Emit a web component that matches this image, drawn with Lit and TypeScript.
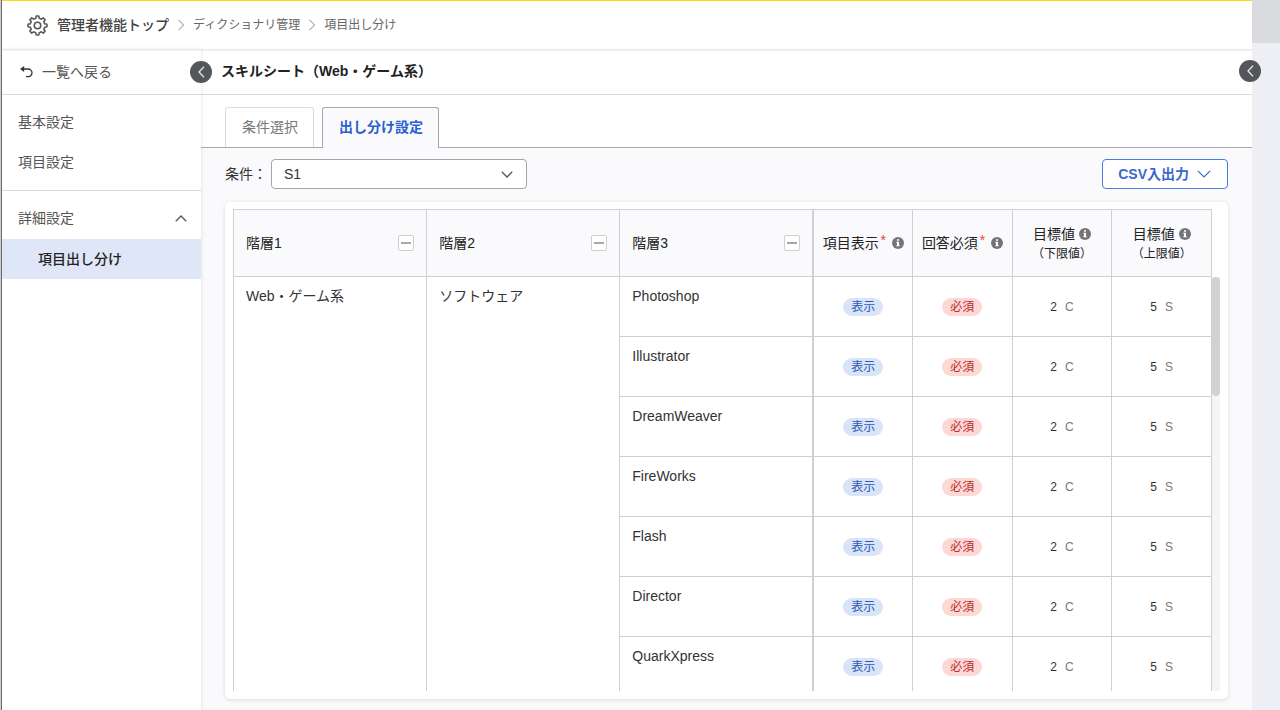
import { LitElement, html, css } from "lit";
import { customElement, state } from "lit/decorators.js";

interface SkillRow {
  name: string;
  min: [number, string];
  max: [number, string];
}

const SKILLS: SkillRow[] = [
  "Photoshop",
  "Illustrator",
  "DreamWeaver",
  "FireWorks",
  "Flash",
  "Director",
  "QuarkXpress",
].map((name) => ({ name, min: [2, "C"], max: [5, "S"] }));

const teeth = Array.from({ length: 8 }, (_, i) => {
  const at = (angle: number, r: number) =>
    `${(10 + r * Math.cos(angle)).toFixed(2)} ${(10 + r * Math.sin(angle)).toFixed(2)}`;
  const a = (i * Math.PI) / 4 - Math.PI / 2;
  const start = i ? `A7 7 0 0 1 ${at(a - 0.24, 7)}` : `M${at(a - 0.24, 7)}`;
  return `${start} L${at(a - 0.14, 9.1)} L${at(a + 0.14, 9.1)} L${at(a + 0.24, 7)}`;
}).join(" ");

const chevron = (points: string, box: string) => html`<svg
  class="chev"
  viewBox=${box}
  aria-hidden="true"
>
  <polyline points=${points} />
</svg>`;

const left = () => chevron("6,0.8 1,6 6,11.2", "0 0 7 12");
const right = () => chevron("1,0.8 6,6 1,11.2", "0 0 7 12");
const up = () => chevron("0.8,6.2 6,1 11.2,6.2", "0 0 12 7");
const down = () => chevron("0.8,0.8 6,6 11.2,0.8", "0 0 12 7");

const infoIcon = html`<svg class="info" viewBox="0 0 12 12" aria-hidden="true">
  <circle cx="6" cy="6" r="6" fill="#757579" />
  <path d="M5 2.2h2v1.6H5zM4.4 4.8H7v3.4h.7v1.1H4.3V8.2H5V5.9h-.6z" fill="#fff" />
</svg>`;

@customElement("app-root")
export class AppRoot extends LitElement {
  @state() private detailOpen = true;

  static styles = css`
    :host {
      display: grid;
      grid-template-columns: 2px minmax(0, 1fr) 28px;
      height: 100vh;
      box-sizing: border-box;
      font: 14px/20px "Liberation Sans", "Noto Sans CJK JP", sans-serif;
      color: #333;
      background: #fff;
    }
    * {
      box-sizing: border-box;
    }
    button,
    select {
      font: inherit;
      color: inherit;
      margin: 0;
      padding: 0;
      border: 0;
      background: none;
      cursor: pointer;
    }
    a {
      color: inherit;
      text-decoration: none;
    }
    .chev,
    .gear {
      fill: none;
      stroke: currentColor;
      flex: none;
    }
    .edge {
      background: linear-gradient(90deg, #cfcfcf 50%, #6d6d6d 50%);
    }
    .app {
      display: flex;
      flex-direction: column;
      min-width: 0;
      min-height: 0;
    }
    .topbar {
      flex: none;
      display: flex;
      align-items: center;
      height: 49px;
      padding-left: 25px;
      border-top: 1px solid #ffd814;
      box-shadow: 0 1px 2px rgba(0, 0, 0, 0.14);
      z-index: 2;
    }
    .gear {
      width: 21px;
      height: 21px;
      stroke: #58585a;
      stroke-width: 1.5;
      stroke-linejoin: round;
    }
    .crumbs {
      display: flex;
      align-items: center;
      gap: 8px;
      margin: 0;
      padding: 0 0 0 9px;
      list-style: none;
      font-size: 12px;
      color: #666;
    }
    .crumbs .chev {
      width: 8px;
      height: 12px;
      stroke: #888;
      display: block;
    }
    .crumb-top {
      font-size: 14px;
      font-weight: 500;
      color: #444;
    }
    .body {
      flex: 1;
      display: grid;
      grid-template-columns: 199px minmax(0, 1fr);
      min-height: 0;
    }
    .side {
      display: flex;
      flex-direction: column;
      box-shadow: 1px 0 3px rgba(0, 0, 0, 0.08);
      z-index: 1;
      background: #fff;
      color: #555;
    }
    .side-head {
      position: relative;
      display: flex;
      align-items: center;
      height: 46px;
      padding-left: 17px;
      border-bottom: 1px solid #d9d9d9;
    }
    .back {
      display: flex;
      align-items: center;
      gap: 8px;
    }
    .back svg {
      width: 15px;
      height: 14px;
      fill: none;
      stroke: #333;
      stroke-width: 1.3;
    }
    .round {
      position: absolute;
      display: grid;
      place-items: center;
      width: 22px;
      height: 22px;
      border-radius: 50%;
      background: #55565a;
      color: #e8e8e8;
    }
    .round .chev {
      width: 7px;
      height: 12px;
      stroke-width: 1.3;
    }
    .side-head .round {
      right: -11px;
      top: 12px;
    }
    .rail .round {
      left: -13px;
      top: 60px;
    }
    .menu {
      margin: 0;
      padding: 7px 0 8px;
      list-style: none;
      border-bottom: 1px solid #d9d9d9;
    }
    .menu a {
      display: block;
      padding: 10px 16px;
    }
    .group {
      display: flex;
      align-items: center;
      justify-content: space-between;
      padding: 17px 14px 11px 16px;
      text-align: left;
    }
    .group .chev {
      width: 12px;
      height: 7px;
      stroke-width: 1.3;
    }
    .current {
      padding: 10px 36px;
      background: #dfe6f7;
      color: #222;
      font-weight: 500;
    }
    .main {
      display: flex;
      flex-direction: column;
      min-width: 0;
      min-height: 0;
      background: #fafafd;
    }
    h1 {
      flex: none;
      margin: 0;
      height: 46px;
      padding: 12px 20px 0;
      border-bottom: 1px solid #d9d9d9;
      background: #fff;
      color: #222;
      font-size: 14px;
      font-weight: 700;
      line-height: 20px;
    }
    .tabs {
      flex: none;
      display: flex;
      gap: 8px;
      padding: 12px 24px 0;
      background: #fff;
      border-bottom: 1px solid #a9a9ab;
    }
    .tab {
      height: 40px;
      padding: 0 15px 2px 16px;
      border: 1px solid #dcdcde;
      border-bottom: 0;
      border-radius: 3px 3px 0 0;
      color: #777;
    }
    .tab.on {
      margin-bottom: -1px;
      height: 41px;
      border-color: #a9a9ab;
      background: #fafafd;
      color: #2b5fd0;
      font-weight: 700;
    }
    .tools {
      flex: none;
      display: flex;
      align-items: center;
      padding: 11px 24px 12px;
    }
    .tools label {
      margin-right: 4px;
      color: #333;
    }
    .picker {
      display: grid;
      align-items: center;
      width: 256px;
    }
    .picker > * {
      grid-area: 1 / 1;
    }
    .picker select {
      appearance: none;
      width: 100%;
      height: 30px;
      padding: 0 12px;
      border: 1px solid #a5a5a7;
      border-radius: 4px;
      background: #fff;
    }
    .picker .chev {
      justify-self: end;
      width: 12px;
      height: 7px;
      margin-right: 14px;
      stroke-width: 1.3;
      stroke: #555;
      pointer-events: none;
    }
    .csv {
      display: flex;
      align-items: center;
      gap: 8px;
      height: 30px;
      margin-left: auto;
      padding: 0 16px 0 15px;
      border: 1px solid #4a7be0;
      border-radius: 4px;
      background: #fff;
      color: #3a68cf;
      font-weight: 700;
    }
    .csv .chev {
      width: 14px;
      height: 8px;
      stroke-width: 1.2;
    }
    .card {
      flex: 1;
      display: grid;
      grid-template-columns: minmax(0, 1fr) 8px;
      min-height: 0;
      margin: 1px 24px 11px;
      padding: 7px 8px 8px;
      border-radius: 5px;
      background: #fff;
      box-shadow: 0 1px 4px rgba(0, 0, 0, 0.13);
    }
    .scroll {
      overflow: hidden;
      min-height: 0;
    }
    .bar {
      margin-top: 68px;
      background: #f5f5f5;
      overflow: hidden;
    }
    .thumb {
      height: 119px;
      border-radius: 4px;
      background: #d2d2d2;
    }
    table {
      width: 100%;
      table-layout: fixed;
      border-collapse: separate;
      border-spacing: 0;
      border-right: 1px solid #d0d0d2;
    }
    .col-level {
      width: 19.75%;
    }
    th,
    td {
      padding: 0;
      border-left: 1px solid #d0d0d2;
      border-bottom: 1px solid #d0d0d2;
    }
    th {
      height: 68px;
      border-top: 1px solid #d0d0d2;
      background: #fafafd;
      color: #222;
      font-weight: 400;
    }
    td {
      height: 60px;
      text-align: center;
    }
    .split {
      border-left-width: 2px;
    }
    .level {
      vertical-align: top;
      text-align: left;
      padding: 9px 12px 0;
    }
    .th-level {
      display: flex;
      align-items: center;
      justify-content: space-between;
      padding: 0 12px;
    }
    .fold {
      display: grid;
      place-items: center;
      width: 16px;
      height: 16px;
      border: 1px solid #cfcfcf;
      border-radius: 2px;
      background: #fff;
    }
    .fold::before {
      content: "";
      width: 10px;
      height: 2px;
      background: #a9a9a9;
    }
    .th-value {
      display: flex;
      align-items: center;
      justify-content: center;
      white-space: nowrap;
    }
    .star {
      align-self: flex-start;
      width: 7px;
      margin: 0 5px 0 1px;
      font-size: 14px;
      line-height: 14px;
      color: #e0453a;
    }
    .info {
      flex: none;
      width: 12px;
      height: 12px;
    }
    .goal {
      gap: 4px;
      padding-top: 2px;
    }
    .sub {
      display: block;
      font-size: 12px;
      line-height: 20px;
    }
    .pill {
      display: block;
      width: 40px;
      margin: 0 auto;
      border-radius: 9px;
      font-size: 12px;
      line-height: 18px;
    }
    .show {
      background: #d9e4f8;
      color: #2f5bb5;
    }
    .must {
      background: #fdd9d6;
      color: #b92f2f;
    }
    .score {
      display: flex;
      justify-content: center;
      gap: 8px;
      font-size: 12px;
      line-height: 18px;
    }
    .grade {
      color: #777;
    }
    .rail {
      position: relative;
      z-index: 2;
      background: linear-gradient(#dadbdf 43px, #eeeff4 43px);
    }
  `;

  private goalHead(sub: string) {
    return html`<th scope="col">
      <span class="th-value goal">目標値${infoIcon}</span>
      <span class="sub">（${sub}）</span>
    </th>`;
  }

  private flagHead(label: string, cls = "") {
    return html`<th scope="col" class=${cls}>
      <span class="th-value">${label}<span class="star">*</span>${infoIcon}</span>
    </th>`;
  }

  private score([value, grade]: [number, string]) {
    return html`<td>
      <span class="score"><span>${value}</span><span class="grade">${grade}</span></span>
    </td>`;
  }

  private row(r: SkillRow, i: number) {
    return html`<tr>
      ${i === 0
        ? html`<td class="level" rowspan=${SKILLS.length}>Web・ゲーム系</td>
            <td class="level" rowspan=${SKILLS.length}>ソフトウェア</td>`
        : ""}
      <td class="level">${r.name}</td>
      <td class="split"><span class="pill show">表示</span></td>
      <td><span class="pill must">必須</span></td>
      ${this.score(r.min)}${this.score(r.max)}
    </tr>`;
  }

  render() {
    return html`
      <div class="edge"></div>
      <div class="app">
        <header class="topbar">
          <svg class="gear" viewBox="0 0 20 20" aria-hidden="true">
            <path d="${teeth} A7 7 0 0 1 8.34 3.2 Z" />
            <circle cx="10" cy="10" r="3.1" />
          </svg>
          <ol class="crumbs">
            <li><a class="crumb-top" href="#">管理者機能トップ</a></li>
            <li>${right()}</li>
            <li><a href="#">ディクショナリ管理</a></li>
            <li>${right()}</li>
            <li>項目出し分け</li>
          </ol>
        </header>
        <div class="body">
          <nav class="side">
            <div class="side-head">
              <a class="back" href="#">
                <svg viewBox="0 0 15 14" aria-hidden="true">
                  <path d="M4 4h5.2a3.8 3.8 0 0 1 0 7.6H7" />
                  <path d="M1 4 5.2 .9v6.2z" fill="#333" stroke="none" />
                </svg>
                一覧へ戻る
              </a>
              <button class="round" aria-label="サイドメニュー">${left()}</button>
            </div>
            <ul class="menu">
              <li><a href="#">基本設定</a></li>
              <li><a href="#">項目設定</a></li>
            </ul>
            <button
              class="group"
              aria-expanded=${this.detailOpen}
              @click=${() => (this.detailOpen = !this.detailOpen)}
            >
              詳細設定 ${this.detailOpen ? up() : down()}
            </button>
            ${this.detailOpen
              ? html`<a class="current" href="#" aria-current="page">項目出し分け</a>`
              : ""}
          </nav>
          <main class="main">
            <h1>スキルシート（Web・ゲーム系）</h1>
            <div class="tabs" role="tablist">
              <button class="tab" role="tab" aria-selected="false">条件選択</button>
              <button class="tab on" role="tab" aria-selected="true">出し分け設定</button>
            </div>
            <div class="tools">
              <label for="cond">条件：</label>
              <div class="picker">
                <select id="cond">
                  <option>S1</option>
                </select>
                ${down()}
              </div>
              <button class="csv">
                CSV入出力 ${chevron("0.8,0.8 7,7 13.2,0.8", "0 0 14 8")}
              </button>
            </div>
            <section class="card">
              <div class="scroll">
                <table>
                  <colgroup>
                    <col class="col-level" span="3" />
                    <col span="4" />
                  </colgroup>
                  <thead>
                    <tr>
                      ${[1, 2, 3].map(
                        (n) => html`<th scope="col">
                          <span class="th-level"
                            >階層${n}<button class="fold" aria-label="階層${n}を折りたたむ"></button
                          ></span>
                        </th>`
                      )}
                      ${this.flagHead("項目表示", "split")}${this.flagHead("回答必須")}
                      ${this.goalHead("下限値")}${this.goalHead("上限値")}
                    </tr>
                  </thead>
                  <tbody>
                    ${SKILLS.map((r, i) => this.row(r, i))}
                  </tbody>
                </table>
              </div>
              <div class="bar"><div class="thumb"></div></div>
            </section>
          </main>
        </div>
      </div>
      <aside class="rail">
        <button class="round" aria-label="パネルを開く">${left()}</button>
      </aside>
    `;
  }
}
